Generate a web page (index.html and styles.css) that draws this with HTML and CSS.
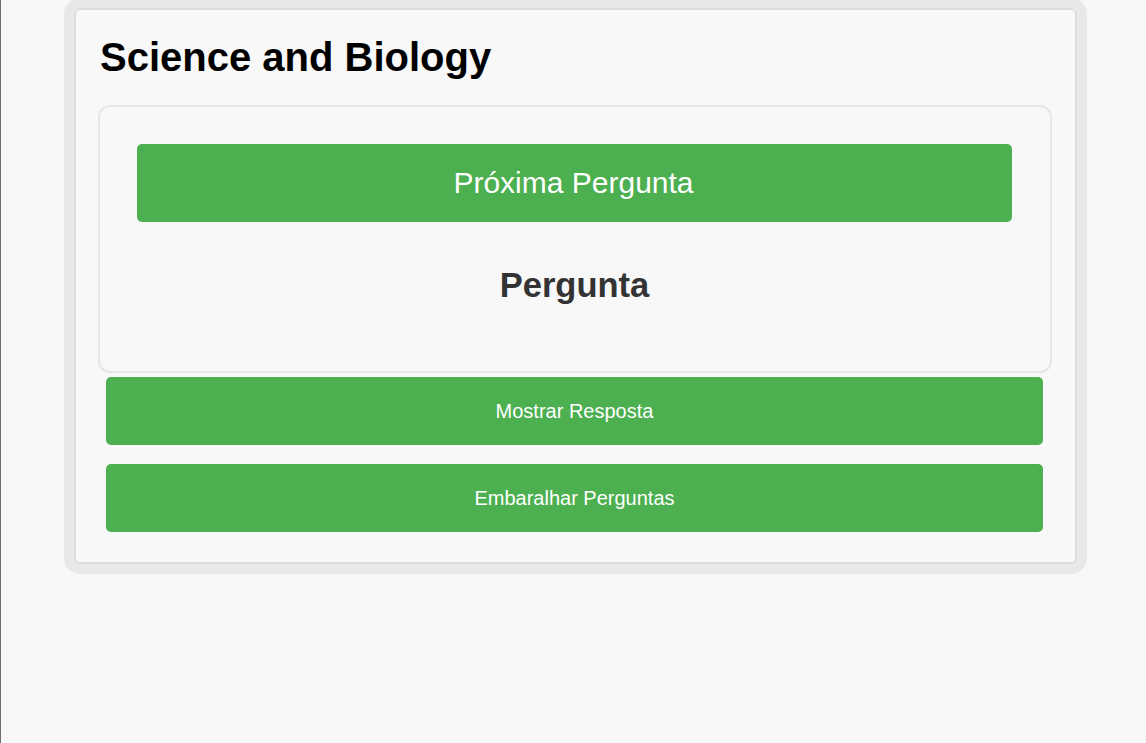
FILE: index.html
```html
<!DOCTYPE html>
<html lang="pt">
<head>
<meta charset="utf-8">
<title>Science and Biology</title>
<link rel="stylesheet" href="styles.css">
</head>
<body>
<div class="frame">
  <h1 class="title">Science and Biology</h1>
  <div class="card">
    <button class="btn btn-next">Próxima Pergunta</button>
    <h2 class="question">Pergunta</h2>
  </div>
  <button class="btn btn-action btn-show">Mostrar Resposta</button>
  <button class="btn btn-action btn-shuffle">Embaralhar Perguntas</button>
</div>
</body>
</html>
```

FILE: styles.css
```css
html {
  background: #f8f8f8;
  border-left: 1px solid #6e6e6e;
  min-height: 100%;
  box-sizing: border-box;
}
body {
  margin: 0;
  font-family: "Liberation Sans", Arial, sans-serif;
  background: #f8f8f8;
}
.frame {
  margin: -2px 0 0 63px;
  border: 10px solid #e8e8e8;
  border-radius: 16px;
  box-shadow: inset 0 0 0 2px #dcdcdc;
  padding: 25px 25px 32px 24px;
  box-sizing: content-box;
  width: 954px;
  display: flex;
  flex-direction: column;
}
.title {
  margin: 1px 0 25px;
  padding-left: 2px;
  font-size: 40px;
  font-weight: bold;
  color: #000;
  line-height: 46px;
}
.card {
  border: 2px solid #e6e6e6;
  border-radius: 12px;
  padding: 37px 38px 36px 37px;
  display: flex;
  flex-direction: column;
  align-items: stretch;
}
.btn {
  font-family: "Liberation Sans", Arial, sans-serif;
  background: #4caf50;
  color: #fff;
  border: none;
  border-radius: 5px;
  cursor: pointer;
}
.btn-next {
  height: 78px;
  font-size: 30px;
  padding: 0 2px 0 0;
}
.question {
  margin: 44px 0 30px;
  text-align: center;
  font-size: 34.5px;
  line-height: 39px;
  font-weight: bold;
  color: #333;
}
.btn-action {
  height: 68px;
  font-size: 20px;
  margin: 0 9px 0 8px;
}
.btn-show {
  margin-top: 4px;
}
.btn-shuffle {
  margin-top: 19px;
}
```
